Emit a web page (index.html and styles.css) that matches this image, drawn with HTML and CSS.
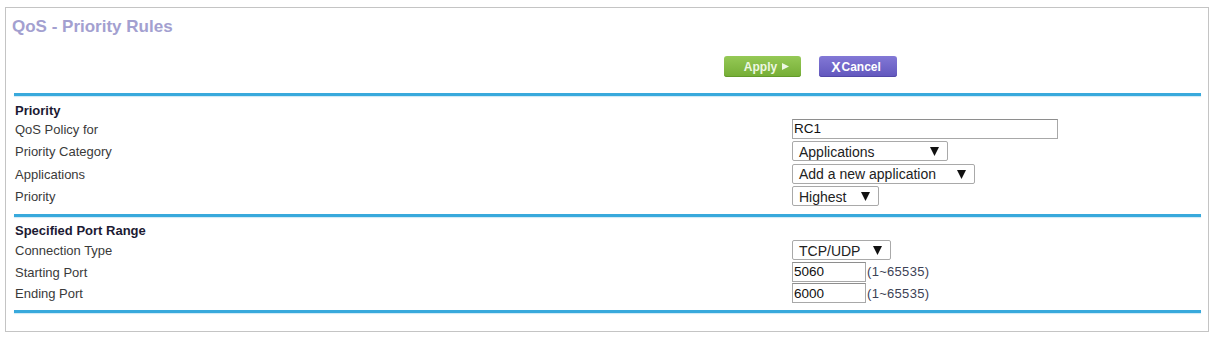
FILE: index.html
```html
<!DOCTYPE html>
<html lang="en">
<head>
<meta charset="utf-8">
<title>QoS - Priority Rules</title>
<link rel="stylesheet" href="styles.css">
</head>
<body>
<div class="panel">
  <h1 class="title">QoS - Priority Rules</h1>
  <div class="actions">
    <button class="btn btn-apply" type="button">Apply <svg class="tri" viewBox="0 0 8 8"><polygon points="0,0 8,4 0,8"/></svg></button>
    <button class="btn btn-cancel" type="button"><span class="x">X</span>Cancel</button>
  </div>
  <div class="rule"></div>

  <div class="section">
    <div class="sec-head">Priority</div>
    <div class="row">
      <div class="label">QoS Policy for</div>
      <div class="ctrl"><input class="text text-long" type="text" value="RC1"></div>
    </div>
    <div class="row">
      <div class="label">Priority Category</div>
      <div class="ctrl"><span class="select sel-cat"><span>Applications</span><svg class="arrow" viewBox="0 0 10 10"><polygon points="0,0 10,0 5,10"/></svg></span></div>
    </div>
    <div class="row">
      <div class="label">Applications</div>
      <div class="ctrl"><span class="select sel-app"><span>Add a new application</span><svg class="arrow" viewBox="0 0 10 10"><polygon points="0,0 10,0 5,10"/></svg></span></div>
    </div>
    <div class="row">
      <div class="label">Priority</div>
      <div class="ctrl"><span class="select sel-pri"><span>Highest</span><svg class="arrow" viewBox="0 0 10 10"><polygon points="0,0 10,0 5,10"/></svg></span></div>
    </div>
  </div>
  <div class="rule rule-2"></div>

  <div class="section section-ports">
    <div class="sec-head">Specified Port Range</div>
    <div class="row row-s">
      <div class="label">Connection Type</div>
      <div class="ctrl"><span class="select sel-conn"><span>TCP/UDP</span><svg class="arrow" viewBox="0 0 10 10"><polygon points="0,0 10,0 5,10"/></svg></span></div>
    </div>
    <div class="row row-s">
      <div class="label">Starting Port</div>
      <div class="ctrl"><input class="text text-port" type="text" value="5060"><span class="range">(1~65535)</span></div>
    </div>
    <div class="row row-s">
      <div class="label">Ending Port</div>
      <div class="ctrl"><input class="text text-port" type="text" value="6000"><span class="range">(1~65535)</span></div>
    </div>
  </div>
  <div class="rule rule-3"></div>
</div>
</body>
</html>
```

FILE: styles.css
```css
html, body {
  margin: 0;
  padding: 0;
  background: #ffffff;
}

body {
  padding: 7px 0 0 5px;
  font-family: "Liberation Sans", Arial, sans-serif;
  color: #333333;
}

.panel {
  box-sizing: border-box;
  width: 1204px;
  height: 325px;
  border: 1px solid #c4c4c4;
  padding: 0 7px 0 8px;
  background: #ffffff;
}

.title {
  margin: 9px 0 0 -2px;
  font-size: 17px;
  line-height: 20px;
  font-weight: bold;
  color: #a3a0d0;
}

.actions {
  display: flex;
  gap: 18px;
  margin: 19px 0 0 710px;
}

.btn {
  box-sizing: border-box;
  height: 21px;
  width: 77px;
  border: 0;
  border-radius: 3px;
  padding: 0;
  font-family: "Liberation Sans", Arial, sans-serif;
  font-size: 12px;
  font-weight: bold;
  color: #ffffff;
  display: flex;
  align-items: center;
  justify-content: center;
}

.btn-apply {
  background: linear-gradient(#95c956, #75ad35);
  box-shadow: inset 0 -1px 0 #639a2a;
  color: #eef7e3;
  padding-left: 8px;
}

.btn-apply .tri {
  width: 7px;
  height: 7px;
  margin-left: 5px;
  fill: #eef7e3;
}

.btn-cancel {
  background: linear-gradient(#8278d6, #6257bd);
  box-shadow: inset 0 -1px 0 #5248a8;
  width: 78px;
  padding-right: 4px;
}

.btn-cancel .x {
  font-size: 14px;
  font-weight: bold;
  margin-right: 1px;
}

.rule {
  height: 3px;
  margin-top: 16px;
  background: #38a9dc;
  box-shadow: 0 1px 1px rgba(56, 169, 220, 0.25);
}

.rule-2 {
  margin-top: 6px;
}

.rule-3 {
  margin-top: 6px;
}

.sec-head {
  margin-top: 7.5px;
  font-size: 13px;
  line-height: 14px;
  font-weight: bold;
  color: #1c1a33;
  padding-left: 1px;
}

.row {
  display: flex;
  align-items: center;
  height: 22.5px;
}

.row-s {
  height: 21.5px;
}

.section-ports .sec-head + .row {
  margin-top: 1.5px;
}

.label {
  width: 778px;
  font-size: 13px;
  line-height: 14px;
  color: #3a3a3a;
  padding-left: 1px;
  padding-top: 2px;
  box-sizing: border-box;
}

.ctrl {
  display: flex;
  align-items: center;
}

.text {
  box-sizing: border-box;
  height: 20px;
  margin: 0;
  border: 1px solid #a8a8a8;
  border-top-color: #8e8e8e;
  padding: 0 0 0 1px;
  font-family: "Liberation Sans", Arial, sans-serif;
  font-size: 13.5px;
  color: #111111;
  background: #ffffff;
  outline: none;
}

.text-long {
  width: 266px;
}

.text-port {
  width: 74px;
}

.range {
  margin-left: 1px;
  font-size: 13px;
  color: #3d4256;
  letter-spacing: 0.3px;
}

.select {
  box-sizing: border-box;
  height: 20px;
  border: 1px solid #a9a9a9;
  border-radius: 2px;
  background: #ffffff;
  display: flex;
  align-items: center;
  justify-content: space-between;
  padding: 1px 8px 0 6px;
  font-size: 14px;
  color: #222222;
}

.arrow {
  width: 9px;
  height: 9px;
  fill: #111111;
}

.sel-cat { width: 156px; }
.sel-app { width: 183px; }
.sel-pri { width: 87px; }
.sel-conn { width: 99px; }
```
